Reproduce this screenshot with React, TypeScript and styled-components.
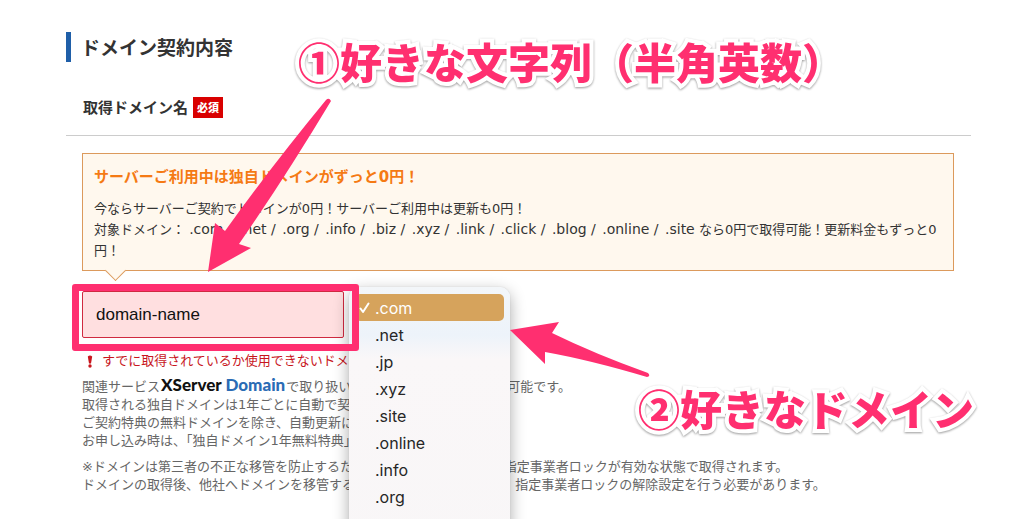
import React from "react";
import styled, { createGlobalStyle, css } from "styled-components";

const GlobalStyle = createGlobalStyle`
  * { box-sizing: border-box; }
  body {
    margin: 0;
    background: #fff;
    color: #333;
    font-family: "DejaVu Sans", "Noto Sans CJK JP", sans-serif;
    font-size: 13px;
  }
  h1, h2, h3, p, ul { margin: 0; padding: 0; }
`;

const Page = styled.main`
  position: relative;
  min-height: 100vh;
  padding: 32px 53px 0 66px;
  overflow: hidden;
`;

const Heading = styled.h1`
  border-left: 5px solid #1f5fa8;
  padding-left: 10px;
  font: bold 19px/30px "Noto Sans CJK JP", sans-serif;
  color: #333;
`;

const FieldHeader = styled.div`
  display: flex;
  align-items: center;
  gap: 5px;
  margin-top: 24px;
  padding: 10px 17px 17px;
  border-bottom: 1px solid #ccc;
`;

const FieldLabel = styled.label`
  font: bold 15px/22px "Noto Sans CJK JP", sans-serif;
`;

const Required = styled.span`
  padding: 0 4px;
  background: #d90000;
  color: #fff;
  font: 900 11px/21px "Noto Sans CJK JP", sans-serif;
`;

const Body = styled.div`
  padding: 17px 17px 0 16px;
`;

const Notice = styled.section`
  position: relative;
  border: 1px solid #dc9a5c;
  background: #fff8ee;
  padding: 11px 11px 9px;
  line-height: 21px;
  &::after {
    content: "";
    position: absolute;
    left: 25px;
    bottom: -8px;
    width: 14px;
    height: 14px;
    border: solid #dc9a5c;
    border-width: 0 1px 1px 0;
    background: #fff8ee;
    transform: rotate(45deg);
  }
`;

const NoticeTitle = styled.h2`
  margin-bottom: 9px;
  color: #f57a14;
  font-size: 15px;
  line-height: 24px;
`;

const Tld = styled.span`
  font-size: 14px;
  &:not(:last-of-type) { margin-right: 2px; }
`;

const Controls = styled.div`
  display: flex;
  gap: 10px;
  margin-top: 20px;
`;

const InputWrap = styled.div`
  position: relative;
  width: 262px;
`;

const DomainInput = styled.input`
  display: block;
  width: 100%;
  height: 47px;
  padding: 0 13px;
  border: 1px solid #d02a40;
  border-radius: 2px;
  background: #ffdfe0;
  color: #111;
  font: 17px "Liberation Sans", sans-serif;
  outline: none;
`;

const Highlight = styled.span`
  position: absolute;
  z-index: 3;
  inset: -7px -15px -13px -10px;
  border: 7px solid #ff2f70;
  border-radius: 3px;
  pointer-events: none;
`;

const SelectWrap = styled.div`
  position: relative;
  width: 155px;
`;

const DomainSelect = styled.select`
  width: 100%;
  height: 47px;
  padding: 0 20px;
  border: 1px solid #5f7fa8;
  border-radius: 4px;
  background: #fff;
  font: 17px Inter, sans-serif;
`;

const Menu = styled.ul`
  position: absolute;
  z-index: 2;
  top: -4px;
  left: -5px;
  width: 161px;
  height: 300px;
  padding: 7px 6px;
  border-radius: 10px;
  background: linear-gradient(#f3f6f9 0, #edf3fa 48px, #faf7f8 72px, #f8f6f7 100%);
  box-shadow: 0 0 1px #8888, 0 5px 16px #0005;
  list-style: none;
`;

const Option = styled.li<{ $selected?: boolean }>`
  display: flex;
  align-items: center;
  height: 27px;
  padding-left: 20px;
  border-radius: 5px;
  color: #262626;
  font: 16px Inter, sans-serif;
  ${(p) =>
    p.$selected &&
    css`
      padding-left: 4px;
      gap: 5px;
      background: #d6a35c;
      color: #fff;
    `}
`;

const ErrorText = styled.p`
  display: flex;
  align-items: center;
  gap: 8px;
  margin-top: 13px;
  padding-left: 4px;
  color: #c8161d;
  line-height: 20px;
`;

const Notes = styled.div`
  display: grid;
  gap: 8px;
  margin-top: 6px;
  color: #666;
  line-height: 18px;
`;

const Brand = styled.a`
  margin: 0 1px;
  color: #2b6cb5;
  font: 900 17px/16px Lato, sans-serif;
  text-decoration: none;
  b { color: #111; font-weight: 900; }
`;

const Arrows = styled.svg`
  position: absolute;
  z-index: 4;
  top: 0;
  left: 0;
  pointer-events: none;
`;

const Callout = styled.strong<{ $x: number; $y: number }>`
  position: absolute;
  z-index: 4;
  left: ${(p) => p.$x}px;
  top: ${(p) => p.$y}px;
  color: #ff2f70;
  font: 900 42px/1 "Noto Sans CJK JP", sans-serif;
  white-space: nowrap;
  -webkit-text-stroke: 8px #fff;
  paint-order: stroke fill;
  filter: drop-shadow(0 1px 1px #0006);
`;

const tlds = [".com", ".net", ".jp", ".xyz", ".site", ".online", ".info", ".org"];
const freeTlds = [".com", ".net", ".org", ".info", ".biz", ".xyz", ".link", ".click", ".blog", ".online", ".site"];

export default function App() {
  return (
    <Page lang="ja">
      <GlobalStyle />
      <Heading>ドメイン契約内容</Heading>
      <FieldHeader>
        <FieldLabel htmlFor="domain">取得ドメイン名</FieldLabel>
        <Required>必須</Required>
      </FieldHeader>
      <Body>
        <Notice>
          <NoticeTitle>サーバーご利用中は独自ドメインがずっと0円！</NoticeTitle>
          <p>今ならサーバーご契約でドメインが0円！サーバーご利用中は更新も0円！</p>
          <p>
            対象ドメイン：{" "}
            {freeTlds.map((t, i) => (
              <Tld key={t}>{i < freeTlds.length - 1 ? `${t} / ` : t}</Tld>
            ))}{" "}
            なら0円で取得可能！更新料金もずっと0円！
          </p>
        </Notice>
        <Controls>
          <InputWrap>
            <DomainInput id="domain" type="text" defaultValue="domain-name" />
            <Highlight />
          </InputWrap>
          <SelectWrap>
            <DomainSelect aria-label="ドメインの種類" defaultValue=".com">
              {tlds.map((t) => (
                <option key={t}>{t}</option>
              ))}
            </DomainSelect>
            <Menu role="listbox" aria-label="ドメインの種類">
              {tlds.map((t, i) => (
                <Option key={t} role="option" aria-selected={i === 0} $selected={i === 0}>
                  {i === 0 && (
                    <svg width="11" height="12" viewBox="0 0 11 12" fill="none" stroke="#fff" strokeWidth="2" strokeLinecap="round" strokeLinejoin="round">
                      <path d="M1.5 6.5 4 10 9.5 1.5" />
                    </svg>
                  )}
                  {t}
                </Option>
              ))}
            </Menu>
          </SelectWrap>
        </Controls>
        <ErrorText role="alert">
          <svg width="8" height="13" viewBox="0 0 8 13" fill="#c8161d">
            <path d="M1.8 1.5Q4-.5 6.2 1.5L5 8.5H3Z" />
            <circle cx="4" cy="11" r="1.7" />
          </svg>
          すでに取得されているか使用できないドメインです。
        </ErrorText>
        <Notes>
          <p>
            関連サービス<Brand href="#"><b>XServer</b> Domain</Brand>で取り扱いのあるドメインのみ取得が可能です。
            <br />
            取得される独自ドメインは1年ごとに自動で契約更新されます。
            <br />
            ご契約特典の無料ドメインを除き、自動更新には料金が必要
            <br />
            お申し込み時は、「独自ドメイン1年無料特典」が適用
          </p>
          <p>
            ※ドメインは第三者の不正な移管を防止するため、レジストラ Lock及び指定事業者ロックが有効な状態で取得されます。
            <br />
            ドメインの取得後、他社へドメインを移管する際には、事前に 設定から、指定事業者ロックの解除設定を行う必要があります。
          </p>
        </Notes>
      </Body>
      <Arrows width="1024" height="519" viewBox="0 0 1024 519" fill="#ff2f70" aria-hidden="true">
        <path d="M208 272 215 223 225 231Q270 168 326 100Q329 97 331 101Q286 176 239 244L251 248Z" />
        <path d="M510 330 559 322 552 333Q595 354 648 373Q651 376 647 377Q590 360 545 352L545 364Z" />
      </Arrows>
      <Callout $x={298} $y={40}>①好きな文字列（半角英数）</Callout>
      <Callout $x={638} $y={387}>②好きなドメイン</Callout>
    </Page>
  );
}
